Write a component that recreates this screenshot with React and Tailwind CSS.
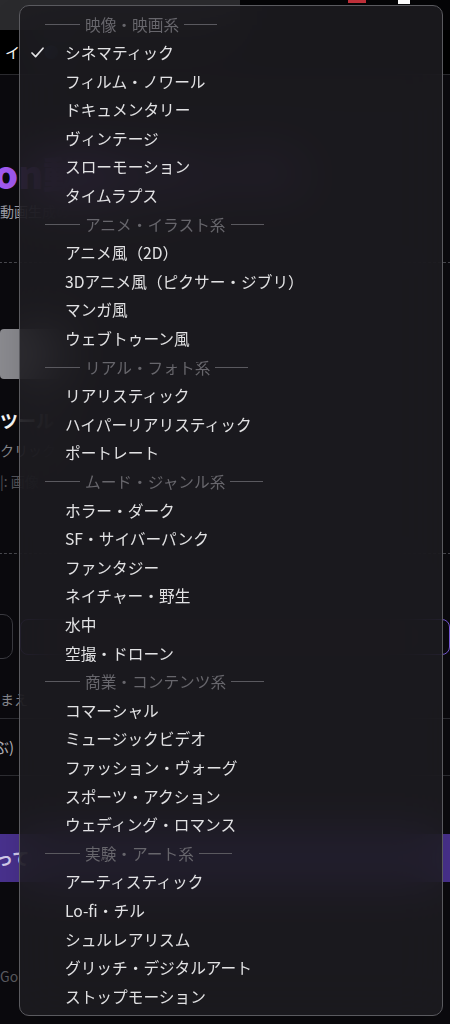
const groups = [
  {
    title: "映像・映画系",
    items: ["シネマティック", "フィルム・ノワール", "ドキュメンタリー", "ヴィンテージ", "スローモーション", "タイムラプス"],
  },
  {
    title: "アニメ・イラスト系",
    items: ["アニメ風（2D）", "3Dアニメ風（ピクサー・ジブリ）", "マンガ風", "ウェブトゥーン風"],
  },
  {
    title: "リアル・フォト系",
    items: ["リアリスティック", "ハイパーリアリスティック", "ポートレート"],
  },
  {
    title: "ムード・ジャンル系",
    items: ["ホラー・ダーク", "SF・サイバーパンク", "ファンタジー", "ネイチャー・野生", "水中", "空撮・ドローン"],
  },
  {
    title: "商業・コンテンツ系",
    items: ["コマーシャル", "ミュージックビデオ", "ファッション・ヴォーグ", "スポーツ・アクション", "ウェディング・ロマンス"],
  },
  {
    title: "実験・アート系",
    items: ["アーティスティック", "Lo-fi・チル", "シュルレアリスム", "グリッチ・デジタルアート", "ストップモーション"],
  },
];

const selected = "シネマティック";

function Check() {
  return (
    <svg width="13" height="11" viewBox="0 0 13 11" fill="none">
      <path d="M1 6 L4.6 9.6 L12 1.2" stroke="#e2e2e4" strokeWidth="1.7" strokeLinecap="round" strokeLinejoin="round" />
    </svg>
  );
}

function Menu() {
  return (
    <div className="absolute left-[19px] top-[5px] w-[424px] h-[1011px] rounded-[10px] border border-[#5a5a5f] bg-[#1d1c21]/[0.86] backdrop-blur-xl pt-[4px] pb-[6px] shadow-2xl overflow-hidden">
      {groups.map((g) => (
        <div key={g.title}>
          <div className="h-[28.6px] flex items-center pl-[25px] text-[15.7px] text-[#67666c]">
            <span className="w-[35px] h-px bg-[#5a595f]" />
            <span className="mx-[5px]">{g.title}</span>
            <span className="w-[33px] h-px bg-[#5a595f]" />
          </div>
          {g.items.map((item) => (
            <div key={item} className="h-[28.6px] flex items-center text-[15.7px] text-[#e2e2e4]">
              <span className="w-[45px] pl-[11px] flex items-center">{item === selected ? <Check /> : null}</span>
              <span>{item}</span>
            </div>
          ))}
        </div>
      ))}
    </div>
  );
}

export default function App() {
  return (
    <div
      className="relative w-[450px] min-h-[1024px] bg-[#0b0a0e] overflow-hidden text-white"
      style={{ fontFamily: '"Noto Sans CJK JP", "Noto Sans", sans-serif' }}
    >
      {/* browser-ish top strip */}
      <div className="h-[30px] flex items-center">
        <div className="h-full w-[240px] bg-[#2a2a2d]" />
        <div className="flex-1 h-full bg-[#050507] flex items-start justify-end gap-8 pr-10">
          <div className="w-[18px] h-[3px] bg-[#c0303a]" />
          <div className="w-[12px] h-[4px] bg-white" />
        </div>
      </div>

      {/* nav */}
      <div className="h-[45px] bg-black border-b border-[#2c2c30] flex items-center pl-[5px] text-[15px] gap-6">
        <span>イ</span>
        <span className="text-[#3b82f6]">●</span>
      </div>

      <main className="flex flex-col">
        <h1 className="mt-[76px] -ml-[6px] text-[38px] leading-[44px] font-black text-[#a55cf7]">
          on動画プロンプト
        </h1>
        <p className="mt-[6px] text-[14px] text-[#a1a1aa]">動画生成のためのプロンプト</p>

        {/* drop zone */}
        <div className="mt-[40px] -mx-4 h-[292px] border-y border-dashed border-[#4a4a50] flex flex-col pl-4">
          <div className="mt-[66px] w-[60px] h-[50px] bg-[#8d8d92] rounded-sm" />
          <p className="mt-[28px] text-[18px] font-bold">ツール</p>
          <p className="mt-[6px] text-[14px] text-[#8a8a90]">クリック</p>
          <p className="mt-[10px] text-[14px] text-[#55555b]">|: 画像</p>
        </div>

        {/* stepper + select */}
        <div className="mt-[60px] flex items-center gap-[7px]">
          <div className="-ml-[30px] w-[43px] h-[45px] rounded-[10px] border border-[#3c3c42]" />
          <div className="flex-1 h-[36px] rounded-[8px] border border-[#7c5ce0]" />
        </div>

        <p className="mt-[30px] text-[14px] text-[#8a8a90]">まえ</p>
        <div className="mt-[8px] h-[58px] border-y border-[#2e2e33] flex items-center text-[15px] text-[#b5b5bb] -ml-[6px]">
          ぶ)
        </div>

        <button className="mt-[58px] h-[48px] bg-[#4a3290] flex items-center text-[17px] font-bold text-[#d8d0f0] -ml-[4px]">
          って
        </button>

        <p className="mt-[84px] text-[14px] text-[#5c5c62]">Go</p>
      </main>

      <Menu />
    </div>
  );
}
